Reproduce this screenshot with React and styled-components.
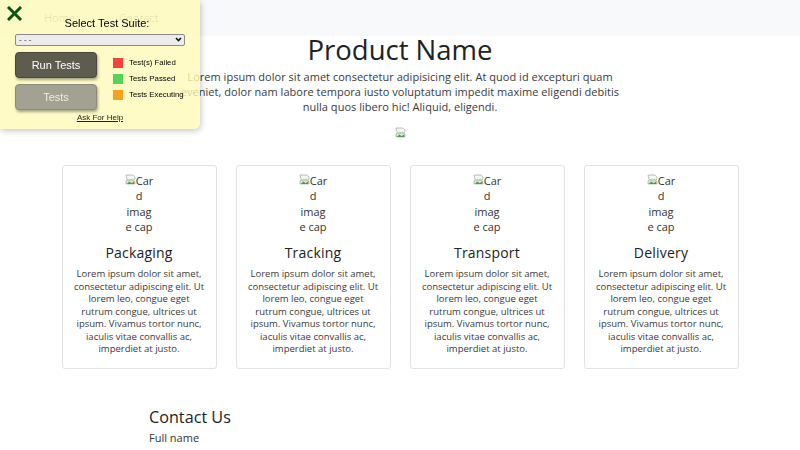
import React from 'react';
import styled, { createGlobalStyle } from 'styled-components';

const GlobalStyle = createGlobalStyle`
  body {
    margin: 0;
    background: #ffffff;
    font-family: 'Open Sans', 'Noto Sans', sans-serif;
    color: #333333;
  }
`;

const Page = styled.div`
  width: 800px;
  min-height: 450px;
  overflow: hidden;
`;

const NavBar = styled.nav`
  height: 36px;
  background: #f8f9fa;
  display: flex;
  align-items: center;
  gap: 44px;
  padding-left: 44px;
  box-sizing: border-box;
`;

const NavLink = styled.a`
  font-size: 11px;
  color: rgba(0, 0, 0, 0.45);
  text-decoration: none;
  margin-top: -2px;
`;

const Hero = styled.section`
  display: flex;
  flex-direction: column;
  align-items: center;
`;

const Title = styled.h1`
  margin: 0;
  font-size: 27.5px;
  line-height: 28px;
  font-weight: 400;
  color: #222222;
`;

const Lead = styled.p`
  margin: 5px 0 0;
  width: 440px;
  text-align: center;
  font-size: 11px;
  line-height: 15px;
  letter-spacing: 0.03px;
  color: #3a3a3a;
`;

const HeroImage = styled.div`
  margin-top: 13px;
  height: 11px;
  display: flex;
`;

const CardRow = styled.div`
  margin: 27px auto 0;
  width: 677px;
  display: grid;
  grid-template-columns: repeat(4, 155px);
  column-gap: 19px;
`;

const Card = styled.div`
  border: 1px solid #e3e3e3;
  border-radius: 3px;
  padding: 7px 10px 12px;
  display: flex;
  flex-direction: column;
  align-items: center;
  box-sizing: border-box;
  height: 204px;
`;

const CardImage = styled.div`
  font-size: 11px;
  line-height: 15.3px;
  color: #333333;
  text-align: center;
  width: 40px;
`;

const CardTitle = styled.h5`
  margin: 10px 0 0;
  font-size: 14px;
  line-height: 18px;
  font-weight: 400;
  letter-spacing: 0.2px;
  color: #222222;
`;

const CardText = styled.p`
  margin: 6px 0 0;
  font-size: 9.5px;
  line-height: 12.5px;
  text-align: center;
  color: #3a3a3a;
`;

const Contact = styled.section`
  width: 502px;
  margin: 38px auto 0;
`;

const ContactTitle = styled.h3`
  margin: 0;
  font-size: 16.2px;
  line-height: 20px;
  font-weight: 400;
  color: #222222;
`;

const FieldLabel = styled.label`
  display: block;
  margin-top: 4px;
  font-size: 11px;
  line-height: 14px;
  color: #333333;
`;

/* test runner overlay */

const Panel = styled.div`
  position: fixed;
  top: 0;
  left: 0;
  width: 200px;
  box-sizing: border-box;
  padding: 17px 15px 6px;
  background: rgba(255, 250, 185, 0.8);
  border-bottom-right-radius: 6px;
  box-shadow: 1px 2px 6px rgba(0, 0, 0, 0.22);
  font-family: 'Liberation Sans', Arial, sans-serif;
  color: #000000;
`;

const CloseButton = styled.button`
  position: absolute;
  top: 6px;
  left: 7px;
  width: 16px;
  height: 16px;
  padding: 0;
  border: none;
  background: none;
  cursor: pointer;
  display: flex;
`;

const PanelTitle = styled.div`
  padding-left: 14px;
  text-align: center;
  font-size: 11px;
  line-height: 12px;
`;

const SelectWrap = styled.div`
  position: relative;
  margin-top: 5px;
  height: 12px;
`;

const SuiteSelect = styled.select`
  appearance: none;
  width: 100%;
  height: 12px;
  box-sizing: border-box;
  padding: 0 0 0 3px;
  border: 1px solid #8a8a8a;
  border-radius: 2px;
  background: #ececec;
  font-family: 'Liberation Sans', Arial, sans-serif;
  font-size: 8px;
  line-height: 10px;
  color: #333333;
  display: block;
`;

const Chevron = styled.svg`
  position: absolute;
  right: 3px;
  top: 3px;
  pointer-events: none;
`;

const Controls = styled.div`
  margin-top: 6px;
  display: flex;
  gap: 16px;
`;

const ButtonColumn = styled.div`
  display: flex;
  flex-direction: column;
  gap: 6px;
`;

const RunButton = styled.button`
  width: 82px;
  height: 26px;
  border: 1px solid ${(p) => (p.$primary ? '#4a483e' : '#8c8a7b')};
  border-radius: 4px;
  background: ${(p) => (p.$primary ? '#5e5b4f' : '#a3a191')};
  color: ${(p) => (p.$primary ? '#ffffff' : '#eeeedf')};
  font-family: 'Liberation Sans', Arial, sans-serif;
  font-size: 11px;
  box-shadow: 1px 2px 3px rgba(0, 0, 0, 0.35);
  cursor: pointer;
`;

const Legend = styled.ul`
  list-style: none;
  margin: 0;
  padding: 6px 0 0;
  display: flex;
  flex-direction: column;
  gap: 6px;
`;

const LegendItem = styled.li`
  display: flex;
  align-items: center;
  gap: 6px;
  font-size: 7.8px;
  line-height: 10px;
  white-space: nowrap;
`;

const Swatch = styled.span`
  width: 10px;
  height: 10px;
  background: ${(p) => p.$color};
  display: inline-block;
`;

const HelpLink = styled.a`
  display: block;
  margin-top: 3px;
  text-align: center;
  font-size: 8px;
  line-height: 10px;
  color: #222222;
  text-decoration: underline;
`;

const BrokenImage = () => (
  <svg width="11" height="11" viewBox="0 0 16 16">
    <path d="M1.5 1.5h10l3 3v3l-2 1.5 -2 -1.5 -2 1.5 -2 -1.5 -2 1.5 -1.5 -1z" fill="#f4f8f4" stroke="#9aa89a" />
    <path d="M1.5 10l2 -1.5 2 1.5 2 -1.5 2 1.5 2 -1.5 3 2v4h-13z" fill="#d9ecd6" stroke="#9aa89a" />
    <path d="M2.5 14.5l4 -3.5 3 2.5 4 -3v4z" fill="#4f9a48" />
  </svg>
);

const cards = ['Packaging', 'Tracking', 'Transport', 'Delivery'];
const cardText =
  'Lorem ipsum dolor sit amet, consectetur adipiscing elit. Ut lorem leo, congue eget rutrum congue, ultrices ut ipsum. Vivamus tortor nunc, iaculis vitae convallis ac, imperdiet at justo.';

const legend = [
  { label: 'Test(s) Failed', color: '#f0443c' },
  { label: 'Tests Passed', color: '#58d158' },
  { label: 'Tests Executing', color: '#f6a11f' },
];

export default function App() {
  return (
    <Page>
      <GlobalStyle />
      <NavBar>
        <NavLink href="#">Home</NavLink>
        <NavLink href="#">Contact</NavLink>
      </NavBar>

      <Hero>
        <Title>Product Name</Title>
        <Lead>
          Lorem ipsum dolor sit amet consectetur adipisicing elit. At quod id excepturi quam
          eveniet, dolor nam labore tempora iusto voluptatum impedit maxime eligendi debitis
          nulla quos libero hic! Aliquid, eligendi.
        </Lead>
        <HeroImage>
          <BrokenImage />
        </HeroImage>
      </Hero>

      <CardRow>
        {cards.map((name) => (
          <Card key={name}>
            <CardImage>
              <BrokenImage />Car
              <br />d<br />imag<br />e cap
            </CardImage>
            <CardTitle>{name}</CardTitle>
            <CardText>{cardText}</CardText>
          </Card>
        ))}
      </CardRow>

      <Contact>
        <ContactTitle>Contact Us</ContactTitle>
        <FieldLabel>Full name</FieldLabel>
      </Contact>

      <Panel>
        <CloseButton aria-label="Close">
          <svg width="15" height="15" viewBox="0 0 15 15">
            <path d="M2 2L13 13M13 2L2 13" stroke="#0d5410" strokeWidth="3" strokeLinecap="square" />
          </svg>
        </CloseButton>
        <PanelTitle>Select Test Suite:</PanelTitle>
        <SelectWrap>
          <SuiteSelect defaultValue="none">
            <option value="none">- - -</option>
          </SuiteSelect>
          <Chevron width="7" height="5" viewBox="0 0 7 5">
            <path d="M1 1l2.5 2.5L6 1" stroke="#111" strokeWidth="1.6" fill="none" />
          </Chevron>
        </SelectWrap>
        <Controls>
          <ButtonColumn>
            <RunButton $primary>Run Tests</RunButton>
            <RunButton>Tests</RunButton>
          </ButtonColumn>
          <Legend>
            {legend.map((item) => (
              <LegendItem key={item.label}>
                <Swatch $color={item.color} />
                {item.label}
              </LegendItem>
            ))}
          </Legend>
        </Controls>
        <HelpLink href="#">Ask For Help</HelpLink>
      </Panel>
    </Page>
  );
}
